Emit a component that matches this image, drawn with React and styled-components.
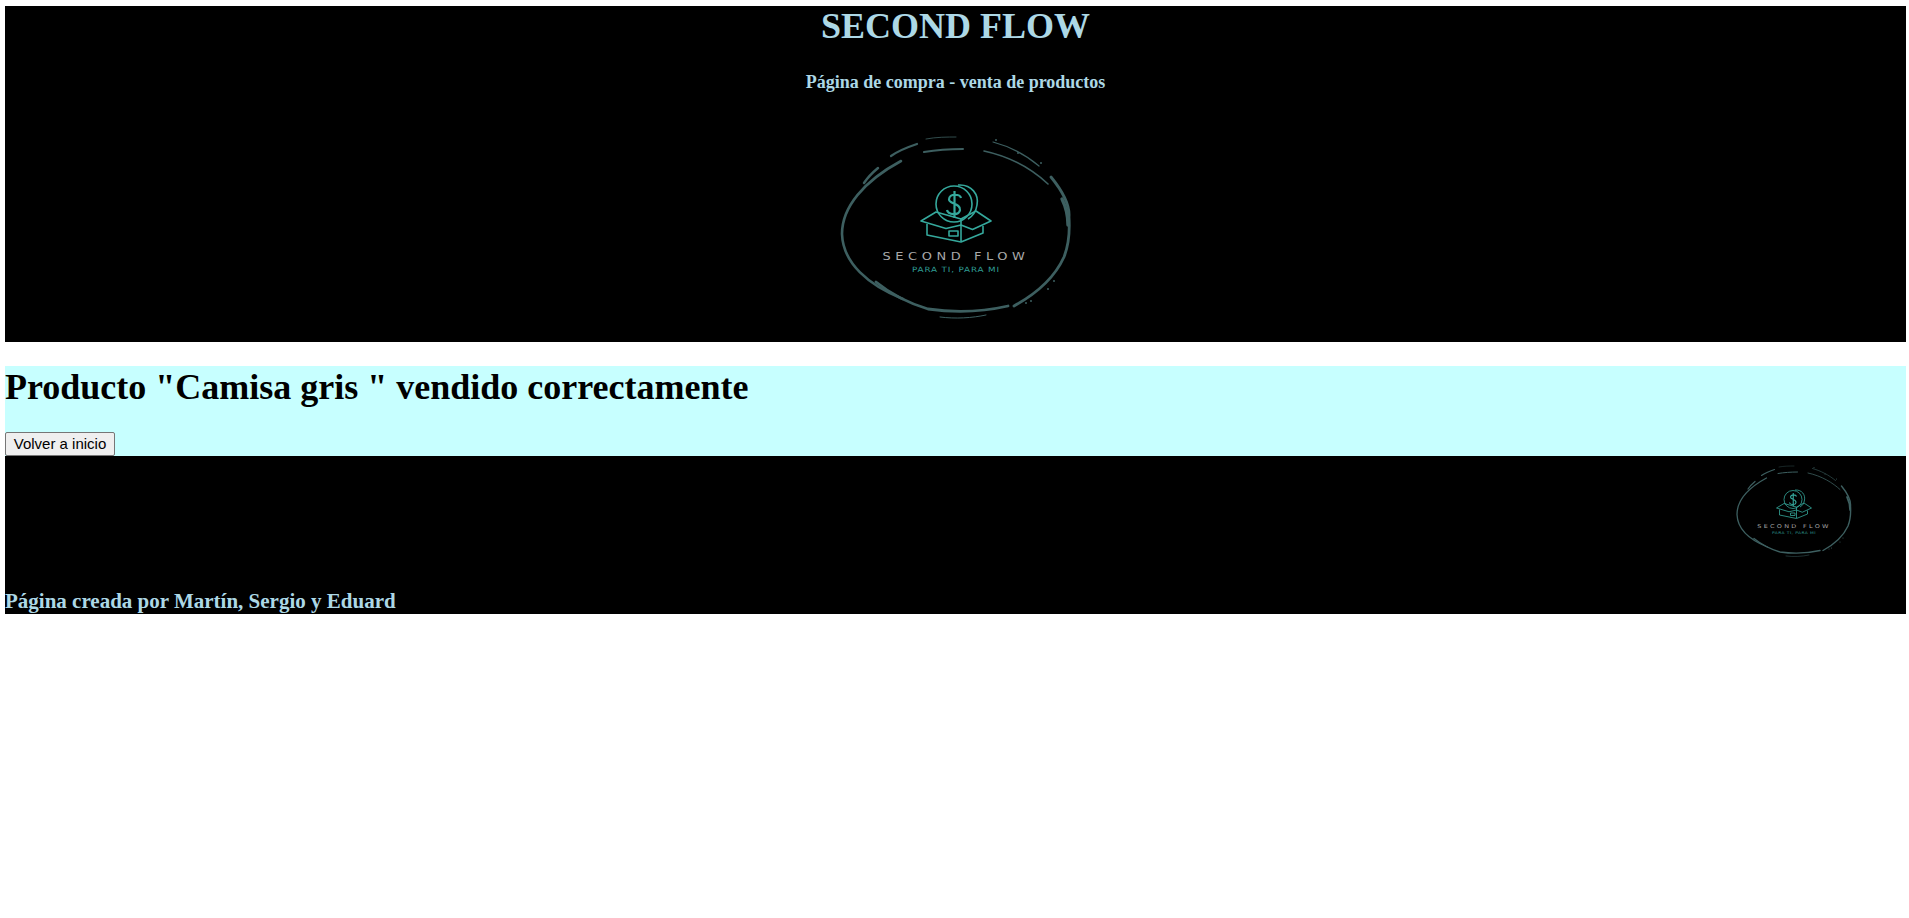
import React from 'react';
import styled, { createGlobalStyle } from 'styled-components';

const GlobalStyle = createGlobalStyle`
    body {
        margin: 6px 3px 0 5px;
        background: #fff;
        font-family: "Liberation Serif", "Times New Roman", serif;
    }
`;

const Header = styled.header`
    display: flex;
    flex-direction: column;
    align-items: center;
    height: 336px;
    background: #000;
    color: #add8e6;
`;

const Title = styled.h1`
    margin: 0;
    font-size: 36px;
    line-height: 41px;
`;

const Subtitle = styled.h3`
    margin: 24px 0 0;
    font-size: 18px;
    line-height: 22px;
`;

const HeaderLogo = styled.div`
    margin-top: 40px;
    line-height: 0;
`;

const Main = styled.main`
    display: flex;
    flex-direction: column;
    align-items: flex-start;
    height: 90px;
    margin-top: 24px;
    background: #c7ffff;
`;

const Message = styled.h2`
    margin: 0 0 24px;
    color: #000;
    font-size: 36px;
    line-height: 42px;
`;

const BackButton = styled.button`
    height: 24px;
    width: 110px;
    padding: 0 0 2px;
    border: 1px solid #767676;
    border-radius: 2px;
    background: #efefef;
    color: #000;
    font-family: "Liberation Sans", Arial, sans-serif;
    font-size: 15px;
`;

const Footer = styled.footer`
    display: flex;
    flex-direction: column;
    height: 158px;
    background: #000;
`;

const FooterLogo = styled.div`
    align-self: flex-end;
    margin: 8px 52px 0 0;
    line-height: 0;
`;

const Credits = styled.h3`
    margin: auto 0 1px;
    color: #add8e6;
    font-size: 21px;
    line-height: 24px;
`;

const LogoName = styled.text`
    fill: #a9a9a9;
    font-family: "DejaVu Sans", sans-serif;
    font-size: 10.5px;
    letter-spacing: 3.7px;
    text-anchor: middle;
`;

const LogoTagline = styled.text`
    fill: #2f9d94;
    font-family: "DejaVu Sans", sans-serif;
    font-size: 7.2px;
    letter-spacing: 0.7px;
    text-anchor: middle;
`;

// rough brush ring around the logo
const ringStrokes = [
    { d: 'M65 28 C28 48 6 74 6 101 C7 130 32 152 67 166', w: 2.6 },
    { d: 'M55 23 C62 18 72 14 81 11', w: 2.2 },
    { d: 'M28 50 C32 44 36 40 42 35', w: 2.4 },
    { d: 'M88 19 C100 17 114 16 127 16', w: 2 },
    { d: 'M148 18 C176 24 198 38 212 51', w: 1.6 },
    { d: 'M157 9 C172 13 190 22 203 33', w: 1.2 },
    { d: 'M40 149 C56 162 72 170 92 176 C120 180 150 178 172 173', w: 2.8 },
    { d: 'M215 44 C228 60 234 72 233 84 C234 100 232 114 228 124 C218 146 198 162 178 173', w: 2.8 },
    { d: 'M226 66 C230 74 232 82 232 92', w: 3.4 },
    { d: 'M104 184 C120 186 136 185 150 182', w: 1 },
    { d: 'M90 6 C100 4 112 4 120 4', w: 0.8 },
];

const ringDots = [
    [212, 156], [190, 170], [218, 148], [205, 30], [182, 20], [160, 7], [195, 168],
];

const Logo = ({ width, height }) => (
    <svg width={width} height={height} viewBox="0 0 240 190">
        <g fill="none" stroke="#3d5f60" strokeLinecap="round">
            {ringStrokes.map((s) => (
                <path key={s.d} d={s.d} strokeWidth={s.w} />
            ))}
        </g>
        <g fill="#3d5f60">
            {ringDots.map(([x, y]) => (
                <circle key={x} cx={x} cy={y} r="1" />
            ))}
        </g>
        <g fill="none" stroke="#35a89c" strokeWidth="1.6" strokeLinejoin="round">
            <circle cx="118" cy="71" r="18" />
            <path d="M122 52 C136 51 143 62 141 72 C140 79 137 83 132 86" />
            <path d="M125 65 C124 61 114 60 113 66 C112 71 125 70 124 77 C123 83 112 82 111 77 M118.500 58 V85" strokeWidth="2.2" />
            <path d="M85 88 L100 79 L125 86 L140 78 L155 88 L136.500 96.500 L125 92 L110 95.500 Z" />
            <path d="M125 86 V108 M91 91 V102 L125 109 L147 100 V93" />
            <path d="M113 98 H122 V103 H113 Z" />
        </g>
        <LogoName x="120" y="127" textLength="147" lengthAdjust="spacingAndGlyphs">SECOND FLOW</LogoName>
        <LogoTagline x="120" y="139" textLength="88" lengthAdjust="spacingAndGlyphs">PARA TI, PARA MI</LogoTagline>
    </svg>
);

const App = () => (
    <>
        <GlobalStyle />
        <Header>
            <Title>SECOND FLOW</Title>
            <Subtitle>Página de compra - venta de productos</Subtitle>
            <HeaderLogo>
                <Logo width={240} height={190} />
            </HeaderLogo>
        </Header>
        <Main>
            <Message>Producto "Camisa gris " vendido correctamente</Message>
            <BackButton>Volver a inicio</BackButton>
        </Main>
        <Footer>
            <FooterLogo>
                <Logo width={120} height={95} />
            </FooterLogo>
            <Credits>Página creada por Martín, Sergio y Eduard</Credits>
        </Footer>
    </>
);

export default App;
